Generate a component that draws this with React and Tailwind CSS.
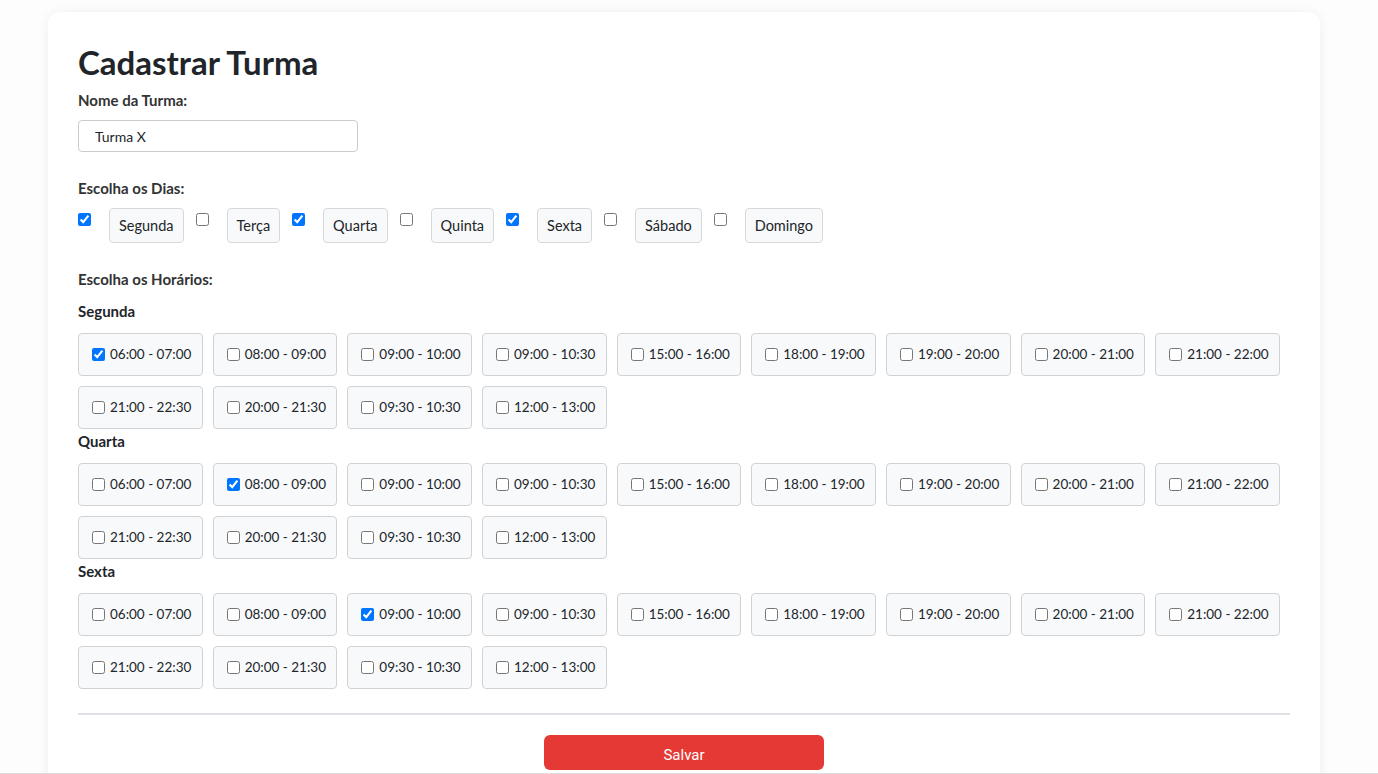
import { useState } from "react";

const DAYS = ["Segunda", "Terça", "Quarta", "Quinta", "Sexta", "Sábado", "Domingo"];

const SLOTS = [
  "06:00 - 07:00",
  "08:00 - 09:00",
  "09:00 - 10:00",
  "09:00 - 10:30",
  "15:00 - 16:00",
  "18:00 - 19:00",
  "19:00 - 20:00",
  "20:00 - 21:00",
  "21:00 - 22:00",
  "21:00 - 22:30",
  "20:00 - 21:30",
  "09:30 - 10:30",
  "12:00 - 13:00",
];

const FONT = { fontFamily: 'Lato, "Noto Sans", sans-serif' };

const App = () => {
  const [name, setName] = useState("Turma X");
  const [days, setDays] = useState({ Segunda: true, Quarta: true, Sexta: true });
  const [slots, setSlots] = useState({
    Segunda: ["06:00 - 07:00"],
    Quarta: ["08:00 - 09:00"],
    Sexta: ["09:00 - 10:00"],
  });

  const toggleDay = (day) => {
    setDays((prev) => ({ ...prev, [day]: !prev[day] }));
  };

  const toggleSlot = (day, slot) => {
    setSlots((prev) => {
      const list = prev[day] || [];
      return {
        ...prev,
        [day]: list.includes(slot) ? list.filter((s) => s !== slot) : [...list, slot],
      };
    });
  };

  const selectedDays = DAYS.filter((d) => days[d]);

  return (
    <div className="min-h-screen bg-[#fdfdfd] pt-3 text-[#212529]" style={FONT}>
      <div className="ml-12 w-[1272px] rounded-xl bg-white px-[30px] pt-[30px] pb-10 shadow-[0_0_12px_rgba(0,0,0,0.06)]">
        <h1 className="text-[33px] font-bold leading-[40px]">Cadastrar Turma</h1>

        <label className="mt-2 block text-[15px] font-bold leading-5 text-[#333]">
          Nome da Turma:
        </label>
        <input
          type="text"
          value={name}
          onChange={(e) => setName(e.target.value)}
          className="mt-[10px] block h-8 w-[280px] rounded-[4px] border border-[#ccc] px-4 text-sm outline-none"
        />

        <p className="mt-[26px] text-[15px] font-bold leading-5 text-[#333]">
          Escolha os Dias:
        </p>
        <div className="mt-[10px] flex items-start">
          {DAYS.map((day, i) => (
            <div key={day} className={`flex items-start ${i === 0 ? "" : "ml-3"}`}>
              <input
                type="checkbox"
                checked={!!days[day]}
                onChange={() => toggleDay(day)}
                className="m-0 mt-[5px] h-[13px] w-[13px]"
              />
              <button
                type="button"
                onClick={() => toggleDay(day)}
                className="ml-[18px] h-[35px] rounded-[4px] border border-[#d6d9dc] bg-[#f8f9fa] px-[9px] text-[14.5px]"
              >
                {day}
              </button>
            </div>
          ))}
        </div>

        <p className="mt-[26px] text-[15px] font-bold leading-5 text-[#333]">
          Escolha os Horários:
        </p>

        {selectedDays.map((day, i) => (
          <div key={day}>
            <h3 className={`${i === 0 ? "mt-3" : "mt-[2px]"} text-[15px] font-bold leading-5`}>
              {day}
            </h3>
            <div className="mt-3 flex w-[1202px] flex-wrap gap-[10px]">
              {SLOTS.map((slot) => (
                <label
                  key={slot}
                  className="flex h-[43px] w-[124.67px] cursor-pointer items-center rounded-[4px] border border-[#d0d3d6] bg-[#f8f9fa] pl-[13px] text-[13.5px]"
                >
                  <input
                    type="checkbox"
                    checked={(slots[day] || []).includes(slot)}
                    onChange={() => toggleSlot(day, slot)}
                    className="m-0 h-[13px] w-[13px]"
                  />
                  <span className="ml-[5px] whitespace-nowrap">{slot}</span>
                </label>
              ))}
            </div>
          </div>
        ))}

        <div className="mt-6 h-[2px] bg-[#dee2e6]" />

        <div className="mt-5 flex justify-center">
          <button
            type="button"
            className="h-[35px] w-[280px] rounded-md bg-[#e53935] pt-[5px] text-[15px] text-white"
            style={{ fontFamily: "Roboto, sans-serif" }}
          >
            Salvar
          </button>
        </div>
      </div>
      <div className="fixed inset-x-0 bottom-0 h-px bg-[#dcdcdc]" />
    </div>
  );
};

export default App;
